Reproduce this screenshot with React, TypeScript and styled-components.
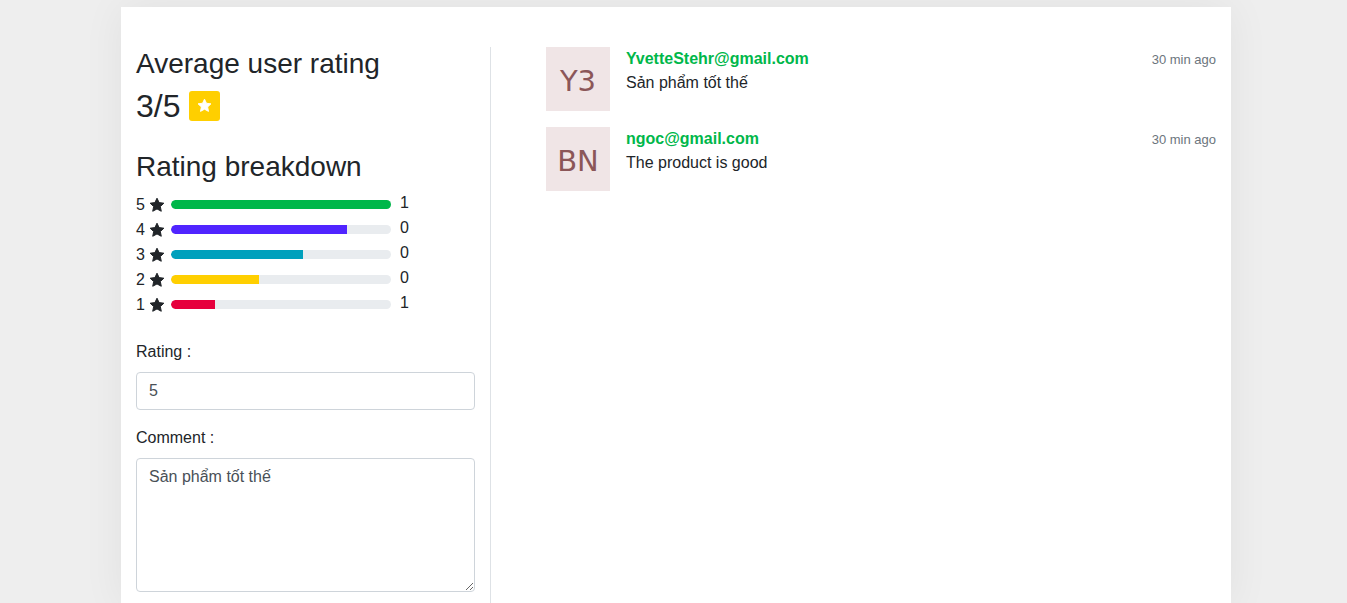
import React from "react";
import styled, { createGlobalStyle } from "styled-components";

const Global = createGlobalStyle`
  html, body { margin: 0; padding: 0; }
  body {
    background: #eeeeee;
    font-family: "Liberation Sans", Arial, sans-serif;
    color: #212529;
    font-size: 16px;
    line-height: 1.5;
  }
  * { box-sizing: border-box; }
`;

const Page = styled.div`
  padding: 7px 0 0 5px;
  display: flex;
  justify-content: center;
`;

const Card = styled.div`
  width: 1110px;
  background: #fff;
  box-shadow: 0 0 40px rgba(0, 0, 0, 0.06);
  padding: 40px 15px 0;
  display: flex;
  min-height: 600px;
`;

const LeftCol = styled.div`
  width: 355px;
  padding-right: 15px;
  border-right: 1px solid #dee2e6;
`;

const RightCol = styled.div`
  flex: 1;
  padding-left: 55px;
`;

const H3 = styled.h3`
  margin: 0 0 6px;
  font-size: 28px;
  font-weight: 400;
  line-height: 1.2;
`;

const Score = styled.h2`
  margin: 0;
  font-size: 32px;
  font-weight: 400;
  line-height: 1.2;
  display: flex;
  align-items: center;
  gap: 9px;
`;

const Badge = styled.span`
  width: 31px;
  height: 30px;
  background: #ffcf00;
  border-radius: 3px;
  display: inline-flex;
  align-items: center;
  justify-content: center;
`;

const Breakdown = styled(H3)`
  margin-top: 25px;
  margin-bottom: 8px;
`;

const BarList = styled.div`
  display: flex;
  flex-direction: column;
`;

const BarRow = styled.div`
  display: flex;
  align-items: center;
  height: 25px;
`;

const RowLabel = styled.span`
  width: 35px;
  display: flex;
  align-items: center;
  gap: 4px;
  font-size: 16px;
  padding-top: 2px;
`;

const Track = styled.div`
  width: 220px;
  height: 9px;
  border-radius: 5px;
  background: #e9ecef;
  overflow: hidden;
`;

const Fill = styled.div<{ $color: string }>`
  height: 100%;
  background: ${(p) => p.$color};
  border-radius: 5px 0 0 5px;
`;

const Count = styled.span`
  margin-left: 9px;
  font-size: 16px;
  margin-top: -2px;
`;

const Form = styled.div`
  margin-top: 23px;
`;

const Label = styled.label`
  display: block;
  font-size: 16px;
  margin-bottom: 8px;
`;

const Input = styled.input`
  display: block;
  width: 339px;
  height: 38px;
  padding: 6px 12px;
  border: 1px solid #ced4da;
  border-radius: 4px;
  font-family: "Liberation Sans", Arial, sans-serif;
  font-size: 16px;
  color: #495057;
  margin-bottom: 16px;
`;

const TextArea = styled.textarea`
  display: block;
  width: 339px;
  height: 134px;
  padding: 6px 12px;
  border: 1px solid #ced4da;
  border-radius: 4px;
  font-family: "Liberation Sans", Arial, sans-serif;
  font-size: 16px;
  line-height: 1.5;
  color: #495057;
  resize: vertical;
`;

const Review = styled.div`
  display: flex;
  margin-bottom: 16px;
`;

const Avatar = styled.div`
  width: 64px;
  height: 64px;
  flex: none;
  background: #f0e5e6;
  color: #8b5658;
  font-family: "DejaVu Sans", sans-serif;
  font-size: 29px;
  display: flex;
  align-items: center;
  justify-content: center;
  padding-top: 6px;
`;

const Body = styled.div`
  flex: 1;
  margin-left: 16px;
`;

const Head = styled.div`
  display: flex;
  justify-content: space-between;
  align-items: baseline;
`;

const Email = styled.span`
  color: #00b74a;
  font-weight: 700;
  font-size: 16px;
  line-height: 24px;
`;

const Time = styled.span`
  color: #6c757d;
  font-size: 13px;
`;

const Text = styled.div`
  font-size: 16px;
  line-height: 24px;
`;

const Star = ({ size, color }: { size: number; color: string }) => (
  <svg width={size} height={size} viewBox="0 0 24 24">
    <path
      fill={color}
      d="M12 1.8l3.1 6.6 7.2.9-5.3 5 1.4 7.1L12 17.9l-6.4 3.5 1.4-7.1-5.3-5 7.2-.9z"
      stroke={color}
      strokeLinejoin="round"
      strokeWidth="1.5"
    />
  </svg>
);

const bars = [
  { n: 5, pct: 100, color: "#00b74a", count: 1 },
  { n: 4, pct: 80, color: "#5024ff", count: 0 },
  { n: 3, pct: 60, color: "#00a0bc", count: 0 },
  { n: 2, pct: 40, color: "#ffcf00", count: 0 },
  { n: 1, pct: 20, color: "#e6003d", count: 1 },
];

const reviews = [
  { init: "Y3", email: "YvetteStehr@gmail.com", text: "Sản phẩm tốt thế" },
  { init: "BN", email: "ngoc@gmail.com", text: "The product is good" },
];

export default function App() {
  return (
    <>
      <Global />
      <Page>
        <Card>
          <LeftCol>
            <H3>Average user rating</H3>
            <Score>
              3/5
              <Badge>
                <Star size={15} color="#fff" />
              </Badge>
            </Score>
            <Breakdown>Rating breakdown</Breakdown>
            <BarList>
              {bars.map((b) => (
                <BarRow key={b.n}>
                  <RowLabel>
                    {b.n}
                    <Star size={16} color="#212529" />
                  </RowLabel>
                  <Track>
                    <Fill $color={b.color} style={{ width: `${b.pct}%` }} />
                  </Track>
                  <Count>{b.count}</Count>
                </BarRow>
              ))}
            </BarList>
            <Form>
              <Label>Rating :</Label>
              <Input defaultValue="5" />
              <Label>Comment :</Label>
              <TextArea defaultValue="Sản phẩm tốt thế" />
            </Form>
          </LeftCol>
          <RightCol>
            {reviews.map((r) => (
              <Review key={r.email}>
                <Avatar>{r.init}</Avatar>
                <Body>
                  <Head>
                    <Email>{r.email}</Email>
                    <Time>30 min ago</Time>
                  </Head>
                  <Text>{r.text}</Text>
                </Body>
              </Review>
            ))}
          </RightCol>
        </Card>
      </Page>
    </>
  );
}
